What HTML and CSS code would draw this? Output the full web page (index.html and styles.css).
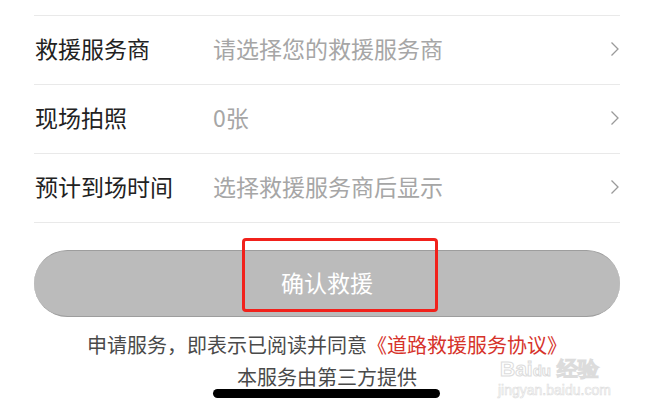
FILE: index.html
```html
<!DOCTYPE html>
<html lang="zh">
<head>
<meta charset="utf-8">
<link rel="stylesheet" href="styles.css">
</head>
<body>
<div class="page">
  <div class="list">
    <div class="row">
      <span class="label">救援服务商</span>
      <span class="value">请选择您的救援服务商</span>
      <svg class="chev" width="10" height="16" viewBox="0 0 10 16"><path d="M1.5 1.5 L8 8 L1.5 14.5" fill="none" stroke="#9a9a9a" stroke-width="1.3"/></svg>
    </div>
    <div class="row">
      <span class="label">现场拍照</span>
      <span class="value">0张</span>
      <svg class="chev" width="10" height="16" viewBox="0 0 10 16"><path d="M1.5 1.5 L8 8 L1.5 14.5" fill="none" stroke="#9a9a9a" stroke-width="1.3"/></svg>
    </div>
    <div class="row">
      <span class="label">预计到场时间</span>
      <span class="value">选择救援服务商后显示</span>
      <svg class="chev" width="10" height="16" viewBox="0 0 10 16"><path d="M1.5 1.5 L8 8 L1.5 14.5" fill="none" stroke="#9a9a9a" stroke-width="1.3"/></svg>
    </div>
  </div>
  <div class="btn-wrap">
    <div class="btn">确认救援</div>
    <div class="highlight"></div>
  </div>
  <div class="footer">
    <p class="line">申请服务，即表示已阅读并同意<span class="link">《道路救援服务协议》</span></p>
    <p class="line">本服务由第三方提供</p>
  </div>
  <div class="watermark">
    <div class="wm-logo">Bai<span class="wm-paw">du</span> 经验</div>
    <div class="wm-url">jingyan.baidu.com</div>
  </div>
  <div class="home-bar"></div>
</div>
</body>
</html>
```

FILE: styles.css
```css
* { box-sizing: border-box; }
html, body {
  margin: 0;
  padding: 0;
  background: #ffffff;
}
body {
  font-family: "Noto Sans CJK SC", "Noto Sans", sans-serif;
  width: 653px;
  height: 412px;
  overflow: hidden;
}
.page {
  position: relative;
  width: 653px;
  height: 412px;
  padding: 15px 33px 0 34px;
}
.list {
  border-bottom: 1px solid #e9e9e9;
}
.row {
  display: flex;
  align-items: center;
  height: 69px;
  border-top: 1px solid #e9e9e9;
  padding-left: 1px;
  padding-bottom: 4px;
}
.label {
  width: 178px;
  font-size: 23px;
  color: #222222;
}
.value {
  flex: 1;
  font-size: 23px;
  color: #a6a6a6;
}
.chev {
  margin-top: 2px;
}
.btn-wrap {
  position: relative;
  margin-top: 27px;
}
.btn {
  height: 67px;
  border-radius: 34px;
  background: #bbbbbb;
  border-top: 1px solid #9d9d9d;
  border-bottom: 1px solid #9d9d9d;
  display: flex;
  align-items: center;
  justify-content: center;
  color: #ffffff;
  font-size: 23px;
  padding-bottom: 3px;
}
.highlight {
  position: absolute;
  left: 208px;
  top: -12px;
  width: 196px;
  height: 74px;
  border: 3px solid #f1211b;
  border-radius: 4px;
}
.footer {
  padding-top: 12px;
  text-align: center;
}
.line {
  margin: 0;
  font-size: 20px;
  line-height: 32px;
  color: #4a4a4a;
}
.link {
  color: #d6332b;
}
.watermark {
  position: absolute;
  left: 500px;
  top: 359px;
  color: #ffffff;
  -webkit-text-stroke: 1px #dcdcdc;
  font-family: "Liberation Sans", sans-serif;
}
.wm-logo {
  font-size: 21px;
  font-weight: bold;
  line-height: 20px;
}
.wm-paw {
  font-size: 15px;
}
.wm-url {
  font-size: 14px;
  line-height: 18px;
  margin-left: -2px;
  -webkit-text-stroke: 0.6px #dcdcdc;
}
.home-bar {
  position: absolute;
  left: 213px;
  top: 389px;
  width: 227px;
  height: 9px;
  border-radius: 5px;
  background: #000000;
}
```
